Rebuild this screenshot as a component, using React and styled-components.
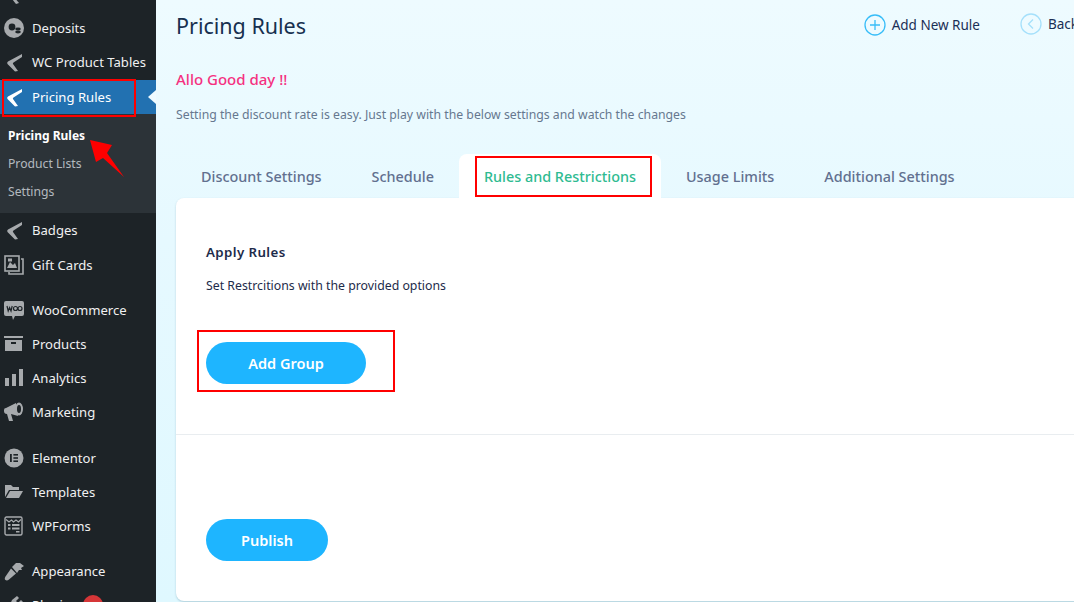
import styled, { createGlobalStyle } from "styled-components";

const GlobalStyle = createGlobalStyle`
  html, body {
    margin: 0;
    padding: 0;
    height: 100%;
    overflow: hidden;
    font-family: "Noto Sans", "Open Sans", sans-serif;
  }
`;

const ICON = "#a7aaad";

//Sidebar icons, all drawn on a 20x20 box.
const ChevronLogo = ({ color = ICON }) => (
  <svg width="20" height="20" viewBox="0 0 20 20">
    <path d="M18 2 L4 9.5 Q2.5 10.5 3.5 12 L11 19.5 L14 19 L9 12 Q8.5 11 9.5 10.5 L18 5 Z" fill={color} />
  </svg>
);

const DepositsIcon = () => (
  <svg width="20" height="20" viewBox="0 0 20 20">
    <circle cx="10" cy="10" r="10" fill={ICON} />
    <circle cx="8" cy="9" r="3.4" fill="#1d2327" />
    <ellipse cx="14" cy="11" rx="2.8" ry="1.4" fill="#1d2327" />
    <ellipse cx="14" cy="14" rx="2.8" ry="1.4" fill="#1d2327" />
  </svg>
);

const GiftIcon = () => (
  <svg width="20" height="20" viewBox="0 0 20 20" fill="none" stroke={ICON}>
    <rect x="1" y="1" width="14" height="15" strokeWidth="1.6" />
    <path d="M17 4 H19 V19 H5 V17" strokeWidth="1.6" />
    <path d="M3 13 L6 7 L9 10 L11 8 L13 13 Z" fill={ICON} stroke="none" />
    <rect x="4" y="3.5" width="4" height="3" fill={ICON} stroke="none" />
  </svg>
);

const WooIcon = () => (
  <svg width="20" height="20" viewBox="0 0 20 20">
    <path d="M2 1 H18 Q20 1 20 3 V14 Q20 16 18 16 H11 L9 20 L8 16 H2 Q0 16 0 14 V3 Q0 1 2 1 Z" fill={ICON} />
    <path d="M3 6 L4.2 11 L5.6 7.5 L7 11 L8.2 6" fill="none" stroke="#1d2327" strokeWidth="1.2" />
    <circle cx="11.5" cy="8.5" r="2" fill="none" stroke="#1d2327" strokeWidth="1.2" />
    <circle cx="16" cy="8.5" r="2" fill="none" stroke="#1d2327" strokeWidth="1.2" />
  </svg>
);

const ProductsIcon = () => (
  <svg width="20" height="20" viewBox="0 0 20 20">
    <rect x="0" y="2" width="19" height="2" fill={ICON} />
    <path d="M1 6 H18 V17 H1 Z M7 8 V10 H12 V8 Z" fill={ICON} fillRule="evenodd" />
  </svg>
);

const AnalyticsIcon = () => (
  <svg width="20" height="20" viewBox="0 0 20 20">
    <rect x="1" y="10" width="4" height="8" fill={ICON} />
    <rect x="8" y="6" width="4" height="12" fill={ICON} />
    <rect x="15" y="1" width="4" height="17" fill={ICON} />
  </svg>
);

const MarketingIcon = () => (
  <svg width="20" height="20" viewBox="0 0 20 20">
    <path d="M0 8 Q0 6 2 6 L12 1 L14 14 L7 12 L9 19 L5 19 L3 12 Q0 12 0 9 Z" fill={ICON} />
    <ellipse cx="15" cy="7" rx="4" ry="6.5" fill={ICON} />
    <ellipse cx="15" cy="7" rx="2" ry="4" fill="#1d2327" />
  </svg>
);

const ElementorIcon = () => (
  <svg width="20" height="20" viewBox="0 0 20 20">
    <circle cx="10" cy="10" r="9.5" fill={ICON} />
    <rect x="6" y="6" width="1.8" height="8" fill="#1d2327" />
    <rect x="9.4" y="6" width="4.6" height="1.6" fill="#1d2327" />
    <rect x="9.4" y="9.2" width="4.6" height="1.6" fill="#1d2327" />
    <rect x="9.4" y="12.4" width="4.6" height="1.6" fill="#1d2327" />
  </svg>
);

const TemplatesIcon = () => (
  <svg width="20" height="20" viewBox="0 0 20 20">
    <path d="M1 3 H7 L9 5 H15 V8 H5 L1 15 Z" fill={ICON} />
    <path d="M6 9 H19 L15 16 H2 Z" fill={ICON} />
  </svg>
);

const FormsIcon = () => (
  <svg width="20" height="20" viewBox="0 0 20 20" fill="none" stroke={ICON}>
    <rect x="1" y="1" width="17" height="18" rx="1.5" strokeWidth="1.4" />
    <path d="M2 3.5 L5 6 L7.5 4 L9.5 6 L12 4 L14.5 6 L17 3.5" strokeWidth="1.2" />
    <rect x="4" y="8" width="2.5" height="2" fill={ICON} stroke="none" />
    <rect x="8" y="8" width="7.5" height="2" fill={ICON} stroke="none" />
    <rect x="4" y="11.5" width="2.5" height="2" fill={ICON} stroke="none" />
    <rect x="8" y="11.5" width="7.5" height="2" fill={ICON} stroke="none" />
    <rect x="12" y="15" width="3.5" height="1.5" fill={ICON} stroke="none" />
  </svg>
);

const AppearanceIcon = () => (
  <svg width="20" height="20" viewBox="0 0 20 20">
    <path d="M8 6 L12 2 L16 2 L20 5 L17 7 L18 9 L15 9 L13 12 Z" fill={ICON} />
    <path d="M7 7.5 L12 12.5 L5 18.5 Q3 20 1.5 19 Q0 18 1.5 15.5 Z" fill={ICON} />
  </svg>
);

const PluginsIcon = () => (
  <svg width="20" height="20" viewBox="0 0 20 20">
    <path d="M13 1 L15 3 L12 6 L14 8 L17 5 L19 7 L15 12 L8 15 L5 12 L8 5 Z" fill={ICON} />
  </svg>
);

const TopIcon = () => (
  <svg width="20" height="20" viewBox="0 0 20 20">
    <path d="M10 13 L15 19 L12 20 L8 15 Z" fill={ICON} />
  </svg>
);

const Page = styled.div`
  display: flex;
  width: 1074px;
  height: 602px;
  overflow: hidden;
  position: relative;
`;

const Sidebar = styled.nav`
  flex: 0 0 156px;
  height: 602px;
  background: #1d2327;
  color: #f0f0f1;
  overflow: hidden;
`;

const MenuList = styled.div`
  margin-top: -23px;
  display: flex;
  flex-direction: column;
`;

const MenuItem = styled.div`
  position: relative;
  flex: 0 0 auto;
  display: flex;
  align-items: center;
  height: 34px;
  margin-top: ${(p) => p.$gap || 0}px;
  padding-left: 4px;
  font-size: 13.1px;
  white-space: nowrap;
  background: ${(p) => (p.$active ? "#2271b1" : "transparent")};
  color: ${(p) => (p.$active ? "#fff" : "#f0f0f1")};
`;

const IconSlot = styled.span`
  display: flex;
  align-items: center;
  justify-content: center;
  flex: 0 0 20px;
  height: 20px;
  margin-right: 8px;
`;

const CurrentArrow = styled.span`
  position: absolute;
  right: 0;
  top: 10px;
  border-style: solid;
  border-width: 7px 8px 7px 0;
  border-color: transparent #f0fbff transparent transparent;
`;

const Badge = styled.span`
  display: inline-block;
  width: 20px;
  height: 20px;
  margin-left: 6px;
  border-radius: 50%;
  background: #d63638;
`;

const SubMenu = styled.div`
  flex: 0 0 auto;
  display: flex;
  flex-direction: column;
  height: 99px;
  padding: 7px 0;
  box-sizing: border-box;
  background: #2c3338;
`;

const SubItem = styled.div`
  display: flex;
  align-items: center;
  height: 28px;
  padding-left: 8px;
  font-size: ${(p) => (p.$current ? 12 : 12.2)}px;
  font-weight: ${(p) => (p.$current ? 700 : 400)};
  color: ${(p) => (p.$current ? "#fff" : "rgba(240, 246, 252, 0.7)")};
`;

const Main = styled.main`
  flex: 1;
  min-width: 0;
  padding: 0 0 1px 20px;
  background: linear-gradient(180deg, #eefbff 0%, #e6f9ff 40%, #dff8ff 100%);
  display: flex;
  flex-direction: column;
`;

const Header = styled.header`
  display: flex;
  align-items: center;
  height: 50px;
  width: 902px;
`;

const Title = styled.h1`
  margin: 0;
  flex: 1;
  font-size: 21.5px;
  font-weight: 400;
  color: #17304f;
`;

const HeaderLink = styled.a`
  display: flex;
  align-items: center;
  gap: 6px;
  margin: 0 0 2px ${(p) => p.$offset}px;
  font-size: 13.5px;
  color: #1b2f55;
  white-space: nowrap;
`;

const Greeting = styled.p`
  margin: 19px 0 0;
  font-size: 15px;
  line-height: 20px;
  font-weight: 500;
  color: #f5317f;
`;

const Intro = styled.p`
  margin: 17px 0 0;
  font-size: 12.25px;
  line-height: 18px;
  color: #66788f;
`;

const Tabs = styled.div`
  display: flex;
  margin-top: 30px;
  height: 44px;
  width: 898px;
`;

const Tab = styled.div`
  position: relative;
  display: flex;
  align-items: center;
  padding: 1px 25px 0;
  font-size: 14.4px;
  font-weight: 500;
  white-space: nowrap;
  border-radius: 8px 8px 0 0;
  background: ${(p) => (p.$active ? "#fff" : "transparent")};
  color: ${(p) => (p.$active ? "#2fbb91" : "#62708f")};
`;

const Card = styled.section`
  flex: 1;
  width: 1000px;
  background: #fff;
  border-radius: 8px;
  box-shadow: 0 1px 2px rgba(60, 110, 130, 0.3);
  display: flex;
  flex-direction: column;
`;

const CardTop = styled.div`
  height: 237px;
  box-sizing: border-box;
  padding: 45px 30px 0;
  border-bottom: 1px solid #e9edf0;
`;

const CardTitle = styled.h2`
  margin: 0;
  font-size: 13.3px;
  line-height: 18px;
  font-weight: 600;
  letter-spacing: 0.4px;
  color: #1d2b4a;
`;

const CardText = styled.p`
  margin: 16px 0 0;
  font-size: 12.3px;
  line-height: 18px;
  color: #1d2b4a;
`;

const CardBottom = styled.div`
  padding: 84px 30px 0;
`;

const PillButton = styled.button`
  display: block;
  width: ${(p) => p.$width}px;
  height: 42px;
  border: 0;
  border-radius: 21px;
  background: #1eb5ff;
  color: #fff;
  font-family: inherit;
  font-size: 14.5px;
  font-weight: 600;
`;

const ButtonWrap = styled.div`
  position: relative;
  margin-top: 47px;
`;

//Red annotation boxes drawn over the screenshot.
const RedBox = styled.span`
  position: absolute;
  left: ${(p) => p.$left}px;
  top: ${(p) => p.$top}px;
  width: ${(p) => p.$width}px;
  height: ${(p) => p.$height}px;
  box-sizing: border-box;
  border: 2px solid #f00;
  pointer-events: none;
`;

const ArrowOverlay = styled.svg`
  position: absolute;
  left: 85px;
  top: 135px;
`;

const menuTop = [
  { label: "", icon: <TopIcon /> },
  { label: "Deposits", icon: <DepositsIcon /> },
  { label: "WC Product Tables", icon: <ChevronLogo /> },
];

const menuBottom = [
  { label: "Badges", icon: <ChevronLogo /> },
  { label: "Gift Cards", icon: <GiftIcon />, gap: 1 },
  { label: "WooCommerce", icon: <WooIcon />, gap: 11 },
  { label: "Products", icon: <ProductsIcon /> },
  { label: "Analytics", icon: <AnalyticsIcon /> },
  { label: "Marketing", icon: <MarketingIcon /> },
  { label: "Elementor", icon: <ElementorIcon />, gap: 12 },
  { label: "Templates", icon: <TemplatesIcon /> },
  { label: "WPForms", icon: <FormsIcon /> },
  { label: "Appearance", icon: <AppearanceIcon />, gap: 11 },
  { label: "Plugins", icon: <PluginsIcon />, badge: true },
];

const Row = ({ item }) => (
  <MenuItem $gap={item.gap}>
    <IconSlot>{item.icon}</IconSlot>
    {item.label}
    {item.badge && <Badge />}
  </MenuItem>
);

const App = () => {
  return (
    <Page>
      <GlobalStyle />
      <Sidebar>
        <MenuList>
          {menuTop.map((item) => (
            <Row key={item.label} item={item} />
          ))}
          <MenuItem $active $gap={1}>
            <IconSlot>
              <ChevronLogo color="#fff" />
            </IconSlot>
            Pricing Rules
            <CurrentArrow />
          </MenuItem>
          <SubMenu>
            <SubItem $current>Pricing Rules</SubItem>
            <SubItem>Product Lists</SubItem>
            <SubItem>Settings</SubItem>
          </SubMenu>
          {menuBottom.map((item) => (
            <Row key={item.label} item={item} />
          ))}
        </MenuList>
      </Sidebar>

      <Main>
        <Header>
          <Title>Pricing Rules</Title>
          <HeaderLink>
            <svg width="22" height="22" viewBox="0 0 22 22" fill="none" stroke="#38bdf8" strokeWidth="1.3">
              <circle cx="11" cy="11" r="10" />
              <path d="M11 6 V16 M6 11 H16" />
            </svg>
            Add New Rule
          </HeaderLink>
          <HeaderLink $offset={40}>
            <svg width="22" height="22" viewBox="0 0 22 22" fill="none" stroke="#a5e0fb" strokeWidth="1.3">
              <circle cx="11" cy="11" r="10" />
              <path d="M13 6.5 L8.5 11 L13 15.5" />
            </svg>
            Back
          </HeaderLink>
        </Header>

        <Greeting>Allo Good day !!</Greeting>
        <Intro>Setting the discount rate is easy. Just play with the below settings and watch the changes</Intro>

        <Tabs>
          <Tab>Discount Settings</Tab>
          <Tab>Schedule</Tab>
          <Tab $active>
            Rules and Restrictions
            <RedBox $left={16} $top={2} $width={177} $height={41} />
          </Tab>
          <Tab>Usage Limits</Tab>
          <Tab>Additional Settings</Tab>
        </Tabs>

        <Card>
          <CardTop>
            <CardTitle>Apply Rules</CardTitle>
            <CardText>Set Restrcitions with the provided options</CardText>
            <ButtonWrap>
              <PillButton $width={160}>Add Group</PillButton>
              <RedBox $left={-9} $top={-12} $width={198} $height={62} />
            </ButtonWrap>
          </CardTop>
          <CardBottom>
            <PillButton $width={122}>Publish</PillButton>
          </CardBottom>
        </Card>
      </Main>

      <RedBox $left={2} $top={79} $width={134} $height={38} />
      <ArrowOverlay width="42" height="46" viewBox="85 135 42 46">
        <polygon points="90,140 112,145 107,153 124,177 103,158 96,162" fill="#f00" />
      </ArrowOverlay>
    </Page>
  );
};

export default App;
